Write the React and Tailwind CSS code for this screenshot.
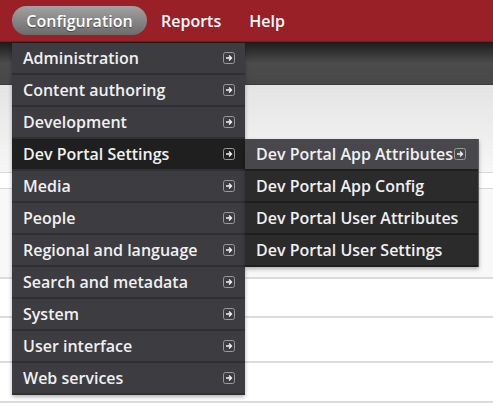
import React from "react";

const mainItems = [
  "Administration",
  "Content authoring",
  "Development",
  "Dev Portal Settings",
  "Media",
  "People",
  "Regional and language",
  "Search and metadata",
  "System",
  "User interface",
  "Web services",
];

const subItems = [
  "Dev Portal App Attributes",
  "Dev Portal App Config",
  "Dev Portal User Attributes",
  "Dev Portal User Settings",
];

function ArrowBox() {
  return (
    <svg width="12" height="12" viewBox="0 0 12 12" className="shrink-0">
      <rect x="0.5" y="0.5" width="11" height="11" rx="2" fill="none" stroke="#9a9a9c" />
      <path d="M3 6h5.5M6 3.5 8.5 6 6 8.5" fill="none" stroke="#f2f2f2" strokeWidth="1.3" />
    </svg>
  );
}

export default function App() {
  return (
    <div
      className="relative w-[493px] h-[407px] overflow-hidden bg-white"
      style={{ fontFamily: '"Open Sans", "DejaVu Sans", sans-serif' }}
    >
      {/* HEADER */}
      <header className="h-[42px] bg-[#9a2028] flex items-center pl-[12px] border-b border-[#7a1a20]">
        <div className="h-[29px] w-[135px] rounded-full bg-gradient-to-b from-[#a2a2a2] to-[#6c6c6c] flex items-center justify-center text-[16px] font-semibold text-white [text-shadow:0_1px_1px_rgba(0,0,0,0.4)]">
          Configuration
        </div>
        <span className="ml-[14px] text-[16px] font-semibold text-white">Reports</span>
        <span className="ml-[28px] text-[16px] font-semibold text-white">Help</span>
      </header>

      {/* DARK BAR */}
      <div className="h-[43px] bg-gradient-to-b from-[#1c1c1c] via-[#4c4c4c] to-[#474747] border-b border-[#3a3a3a]" />

      {/* PAGE BODY */}
      <div className="h-[88px] bg-gradient-to-b from-[#e4e4e4] to-[#f6f6f6] border-b border-[#d8d8d8]" />
      <div className="h-[16px] bg-white border-b border-[#d8d8d8]" />
      <div className="h-[90px] bg-[#f8f8f8] border-b-2 border-[#dcdcdc]" />
      <div className="h-[39px] bg-white border-b-2 border-[#dcdcdc]" />
      <div className="h-[45px] bg-white border-b-2 border-[#dcdcdc]" />
      <div className="h-[40px] bg-white border-b-2 border-[#dcdcdc]" />

      {/* DROPDOWN */}
      <ul className="absolute left-[12px] top-[43px] w-[233px] bg-[#3d3c41] shadow-[0_2px_4px_rgba(0,0,0,0.3)]">
        {mainItems.map((item, i) => (
          <li
            key={item}
            className={`h-[32px] flex items-center justify-between pl-[11px] pr-[10px] text-[16px] font-semibold text-[#f0f0f0] border-b-2 border-[#302f34] ${
              i === 3 ? "bg-[#1f1f1f]" : ""
            }`}
          >
            <span>{item}</span>
            <ArrowBox />
          </li>
        ))}
      </ul>

      {/* SUBMENU */}
      <ul className="absolute left-[245px] top-[139px] w-[234px] bg-[#2b2b2b] border-r border-[#5a5a5a] shadow-[0_2px_4px_rgba(0,0,0,0.3)]">
        {subItems.map((item, i) => (
          <li
            key={item}
            className={`h-[32px] flex items-center pl-[11px] text-[16px] font-semibold text-[#f0f0f0] border-b-2 border-[#1e1e1e] ${
              i === 0 ? "bg-[#48474c]" : ""
            }`}
          >
            <span>{item}</span>
            {i === 0 && (
              <span className="ml-[1px]">
                <ArrowBox />
              </span>
            )}
          </li>
        ))}
      </ul>
    </div>
  );
}
